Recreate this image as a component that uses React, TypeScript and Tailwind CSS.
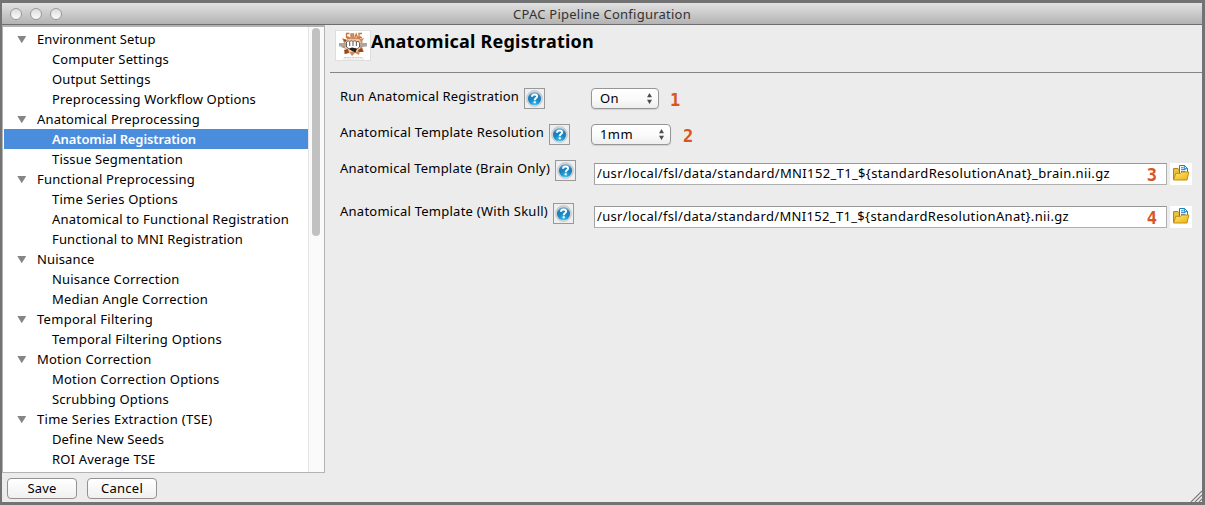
import { useLayoutEffect, useRef, useState } from "react";

type FitProps = { text: string; width: number; className?: string };

/** Single line of text, tracked so that it spans the given width. */
function Fit({ text, width, className = "" }: FitProps) {
  const ref = useRef<HTMLSpanElement>(null);
  const [spacing, setSpacing] = useState(0);
  useLayoutEffect(() => {
    const el = ref.current;
    if (!el) return;
    el.style.letterSpacing = "0px";
    const natural = el.getBoundingClientRect().width;
    const next = (width - natural) / text.length;
    el.style.letterSpacing = `${next}px`;
    setSpacing(next);
  }, [text, width]);
  return (
    <span ref={ref} className={`inline-block shrink-0 whitespace-pre ${className}`} style={{ letterSpacing: spacing }}>
      {text}
    </span>
  );
}

type Item = { text: string; width: number; group?: boolean; selected?: boolean };

const items: Item[] = [
  { text: "Environment Setup", width: 118.5, group: true },
  { text: "Computer Settings", width: 117 },
  { text: "Output Settings", width: 98.5 },
  { text: "Preprocessing Workflow Options", width: 204 },
  { text: "Anatomical Preprocessing", width: 163, group: true },
  { text: "Anatomial Registration", width: 144, selected: true },
  { text: "Tissue Segmentation", width: 131 },
  { text: "Functional Preprocessing", width: 158, group: true },
  { text: "Time Series Options", width: 126 },
  { text: "Anatomical to Functional Registration", width: 237 },
  { text: "Functional to MNI Registration", width: 191 },
  { text: "Nuisance", width: 57.5, group: true },
  { text: "Nuisance Correction", width: 127.5 },
  { text: "Median Angle Correction", width: 156 },
  { text: "Temporal Filtering", width: 116, group: true },
  { text: "Temporal Filtering Options", width: 170 },
  { text: "Motion Correction", width: 114.5, group: true },
  { text: "Motion Correction Options", width: 167.5 },
  { text: "Scrubbing Options", width: 117 },
  { text: "Time Series Extraction (TSE)", width: 175.5, group: true },
  { text: "Define New Seeds", width: 112 },
  { text: "ROI Average TSE", width: 103.5 },
];

function TreeRow({ item }: { item: Item }) {
  return (
    <div
      className={`flex h-5 shrink-0 items-center ${item.selected ? "bg-[#4a8ddd] font-semibold text-white" : ""} ${
        item.group ? "pl-[13px]" : "pl-12"
      }`}
    >
      {item.group && (
        <svg width="10" height="9" viewBox="0 0 10 9" className="mr-2.5 shrink-0">
          <path d="M0.3 1H9.2L4.75 8.3Z" fill="#858585" />
        </svg>
      )}
      <Fit text={item.text} width={item.width} />
    </div>
  );
}

function HelpButton() {
  return (
    <button className="flex size-[21px] shrink-0 items-center justify-center border border-[#999] bg-[#eeeeee]">
      <svg width="17" height="17" viewBox="0 0 17 17">
        <defs>
          <radialGradient id="helpFill" cx="50%" cy="95%" r="95%">
            <stop offset="0" stopColor="#2cc3f4" />
            <stop offset="0.5" stopColor="#1583c2" />
            <stop offset="0.75" stopColor="#2a7fb6" />
            <stop offset="1" stopColor="#8cbcdb" />
          </radialGradient>
        </defs>
        <circle cx="8.5" cy="8.5" r="7.9" fill="#d3dade" stroke="#bcc3c8" strokeWidth="0.8" />
        <circle cx="8.5" cy="8.5" r="6.6" fill="url(#helpFill)" />
        <path d="M6 6.8C6 3.6 11.1 3.7 11.1 6.4C11.1 8.1 8.7 8.1 8.7 10.2" fill="none" stroke="#fff" strokeWidth="2" />
        <rect x="7.6" y="11.2" width="2.2" height="2" rx=".5" fill="#fff" />
      </svg>
    </button>
  );
}

function Popup({ text, textWidth, className }: { text: string; textWidth: number; className: string }) {
  return (
    <button
      className={`flex h-[21px] shrink-0 items-center justify-between rounded-[4px] border border-[#969696] bg-linear-to-b from-white via-[#fbfbfb] via-50% to-[#eeeeee] pr-[5px] pl-2 shadow-[0_1px_1px_#d2d2d2] ${className}`}
    >
      <Fit text={text} width={textWidth} className="relative -top-px leading-[18px]" />
      <svg width="7" height="11" viewBox="0 0 7 11">
        <path d="M3.5 0L6 4.2H1ZM3.5 11L6 6.8H1Z" fill="#4b4b4b" />
      </svg>
    </button>
  );
}

function FolderButton() {
  return (
    <button className="ml-[3px] flex size-[22px] shrink-0 items-center justify-center bg-white">
      <svg width="18" height="18" viewBox="0 0 18 18">
        <defs>
          <linearGradient id="folderFill" x1="0" y1="0" x2="1" y2="1">
            <stop offset="0" stopColor="#ffe779" />
            <stop offset="1" stopColor="#efb20b" />
          </linearGradient>
        </defs>
        <path d="M1.5 14.5V3.5H6L7.5 5H14.5V14.5Z" fill="#e9c13e" stroke="#b8870e" />
        <path d="M7.5 9V.5H12.5L15.5 3.5V9H7.5Z" fill="#fff" stroke="#1780c3" />
        <path d="M9 2.8H11.5M9 4.7H13.5M9 6.6H13.5M12.3 .5V3.7H15.5" fill="none" stroke="#1780c3" />
        <path d="M1.6 15L3.8 8.3H8.5L10 7H16.8L15 15Z" fill="url(#folderFill)" stroke="#c38f10" />
      </svg>
    </button>
  );
}

function Marker({ n, className = "" }: { n: string; className?: string }) {
  return (
    <span className={`font-['DejaVu_Sans_Mono',monospace] text-[17px] leading-5 font-bold text-[#d9541e] ${className}`}>{n}</span>
  );
}

function Logo() {
  return (
    <svg width="36" height="31" viewBox="0 0 36 31" className="shrink-0">
      <rect x=".5" y=".5" width="35" height="30" fill="#fff" stroke="#dedede" />
      <path
        d="M18 6L20 8L26 6L25 9L29 8L27 12L31 16L27 17L29 22L25 21L24 25L20 23L17 26L14 22L9 24L11 19L6 17L9 13L7 8L12 10L12 6L16 8Z"
        fill="#cf8a5a"
      />
      <path d="M13 9H24L26 12L25 19L22 22H14L10 18V12Z" fill="#f0c9a4" />
      <path d="M9 20L13 19L14 23L10 24ZM23 20L27 18L28 22L24 22ZM8 9L12 10L10 12Z" fill="#99461f" />
      <path d="M4 13H13V16.5H4ZM24 13H32V16.5H24Z" fill="#a5a8aa" />
      <path
        d="M11.5 12Q13 10 14.7 11.5Q16.3 10 18 11.5Q19.7 10 21.4 11.5Q24.5 10.5 24.5 13.5V17L21.5 19.5H15L11.5 17Z"
        fill="#fff"
        stroke="#4a4140"
        strokeWidth=".8"
      />
      <path d="M14.7 12V16M18 12V16M21.4 12V16" stroke="#4a4140" strokeWidth=".9" />
      <path d="M14 18.5L17 17.5L22 18.5L20.5 22.5L17 21Z" fill="#241e1c" />
      <path
        d="M14.5 3.5H11.5V7.5H14.5M16 8V4H18.5V6H16M19.7 8L21.2 4L22.7 8M27 3.5H24V7.5H27"
        fill="none"
        stroke="#c9763f"
        strokeWidth="1.3"
      />
      <path d="M9 27.5H28" stroke="#bbb" strokeWidth=".8" strokeDasharray="2 .7" />
      <path d="M8 29H29" stroke="#ccc" strokeWidth=".6" />
    </svg>
  );
}

function PathRow({ label, labelWidth, value, valueWidth, n }: { label: string; labelWidth: number; value: string; valueWidth: number; n: string }) {
  return (
    <div className="flex h-[25px] items-start">
      <div className="flex w-[254px] shrink-0 items-start">
        <Fit text={label} width={labelWidth} className="relative -top-px leading-[18px]" />
        <div className="ml-[5px]">
          <HelpButton />
        </div>
      </div>
      <div className="mt-[3px] flex h-[22px] w-[573px] items-center justify-between border border-t-[#979797] border-r-[#b0b0b0] border-b-[#b0b0b0] border-l-[#a2a2a2] bg-white pr-2 pl-[2px]">
        <Fit text={value} width={valueWidth} className="relative -top-px leading-[18px]" />
        <Marker n={n} className="relative right-px top-px" />
      </div>
      <div className="mt-[3px]">
        <FolderButton />
      </div>
    </div>
  );
}

function TitleBar() {
  return (
    <header className="flex h-[22px] shrink-0 items-center border-b border-[#6d6d6d] bg-linear-to-b from-[#e2e2e2] to-[#b3b3b3]">
      <div className="flex w-[200px] gap-2 pl-2">
        {[0, 1, 2].map((i) => (
          <span key={i} className="size-3 rounded-full border border-[#999] bg-linear-to-b from-[#dcdcdc] to-[#fbfbfb]" />
        ))}
      </div>
      <div className="flex grow justify-center pr-[200px] text-[#333]">
        <Fit text="CPAC Pipeline Configuration" width={178} className="leading-5" />
      </div>
    </header>
  );
}

export default function App() {
  return (
    <div className="flex h-[505px] w-[1205px] flex-col border-t-[3px] border-r-[3px] border-b-[3px] border-l-2 border-[#737373] bg-[#ececec] font-['Noto_Sans',sans-serif] text-[13px] leading-5 text-black">
      <TitleBar />
      <div className="flex grow">
        <aside className="flex w-[323px] shrink-0 flex-col">
          <div className="flex h-[448px] border-t-2 border-r border-b border-l border-[#b3b3b3] bg-white">
            <nav className="flex w-[305px] shrink-0 flex-col overflow-hidden pt-[2px] pl-px">
              {items.map((item) => (
                <TreeRow key={item.text} item={item} />
              ))}
            </nav>
            <div className="flex grow border-l border-[#e4e4e4] bg-[#fafafa] pt-px pl-[3px]">
              <div className="h-[208px] w-2 rounded-full bg-[#c1c1c1]" />
            </div>
          </div>
          <div className="flex gap-2.5 pt-[5px] pl-[5px]">
            <button className="flex h-[21px] w-[70px] items-center justify-center rounded-[4px] border border-[#929292] bg-linear-to-b from-white to-[#f0f0f0]">
              <Fit text="Save" width={29} className="relative -top-px" />
            </button>
            <button className="flex h-[21px] w-[70px] items-center justify-center rounded-[4px] border border-[#929292] bg-linear-to-b from-white to-[#f0f0f0]">
              <Fit text="Cancel" width={42} className="relative -top-px" />
            </button>
          </div>
        </aside>
        <main className="flex grow flex-col pl-[5px]">
          <div className="flex h-12 items-start border-b border-[#858585] pt-[5px] pl-[5px]">
            <Logo />
            <h1 className="text-[18px] leading-[22px] font-bold">
              <Fit text="Anatomical Registration" width={223} />
            </h1>
          </div>
          <section className="flex grow flex-col pt-[15px] pl-2.5">
            <div className="flex h-9 items-start">
              <div className="flex w-[251px] shrink-0 items-start">
                <Fit text="Run Anatomical Registration" width={179} className="relative -top-px leading-[18px]" />
                <div className="ml-[5px]">
                  <HelpButton />
                </div>
              </div>
              <Popup text="On" textWidth={19} className="w-[68px]" />
              <Marker n="1" className="ml-[11px] pt-[2px]" />
            </div>
            <div className="flex h-9 items-start">
              <div className="flex w-[251px] shrink-0 items-start">
                <Fit text="Anatomical Template Resolution" width={204} className="relative -top-px leading-[18px]" />
                <div className="ml-[5px]">
                  <HelpButton />
                </div>
              </div>
              <Popup text="1mm" textWidth={33} className="w-20" />
              <Marker n="2" className="ml-3 pt-[2px]" />
            </div>
            <div className="flex flex-col gap-[18px]">
              <PathRow
                label="Anatomical Template (Brain Only)"
                labelWidth={210}
                value="/usr/local/fsl/data/standard/MNI152_T1_${standardResolutionAnat}_brain.nii.gz"
                valueWidth={513}
                n="3"
              />
              <PathRow
                label="Anatomical Template (With Skull)"
                labelWidth={208}
                value="/usr/local/fsl/data/standard/MNI152_T1_${standardResolutionAnat}.nii.gz"
                valueWidth={472}
                n="4"
              />
            </div>
          </section>
          <div className="flex justify-end">
            <svg width="12" height="12" viewBox="0 0 12 12">
              <path d="M1 12L12 1M5 12L12 5M9 12L12 9" stroke="#777" strokeWidth="1.1" />
            </svg>
          </div>
        </main>
      </div>
    </div>
  );
}
